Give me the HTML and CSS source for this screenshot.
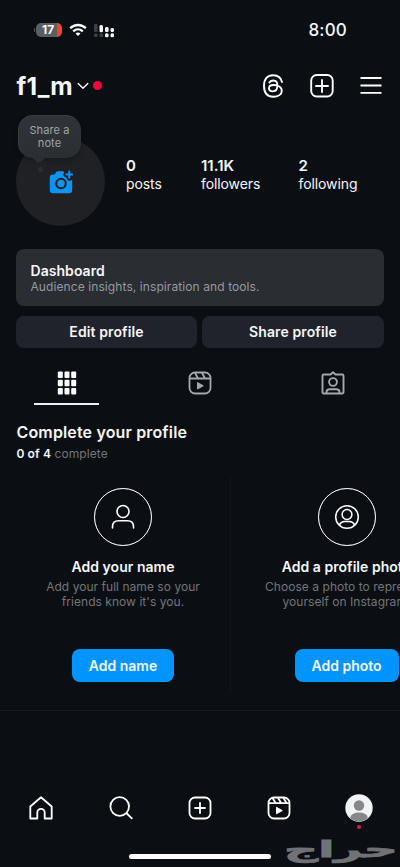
FILE: index.html
```html
<!DOCTYPE html>
<html lang="en">
<head>
<meta charset="utf-8">
<meta name="viewport" content="width=device-width, initial-scale=1">
<title>f1_m</title>
<link rel="stylesheet" href="styles.css">
</head>
<body>
<div class="screen">
  <div class="status">
    <div class="status-left">
      <div class="battery"><span>17</span></div>
      <svg class="wifi" width="18" height="14" viewBox="0 0 18 14" fill="none" stroke="#fff" stroke-width="2.3"><path d="M1.200 5.200C5.600.9 12.400.9 16.800 5.200M4.200 8.300C7 5.700 11 5.700 13.800 8.300"/><path d="M9 13 6.500 10.500C8 9.200 10 9.200 11.500 10.500Z" fill="#fff" stroke="none"/></svg>
      <svg class="signal" width="22" height="15" viewBox="0 0 22 15" fill="#fff"><g fill="#3c4045"><rect x="1" y="1" width="3.500" height="8" rx="1"/><rect x="1" y="10.500" width="3.500" height="3.500" rx="1"/><rect x="6.500" y="10.500" width="3.500" height="3.500" rx="1"/></g><rect x="6.500" y="2" width="3.500" height="7.200" rx="1.500"/><rect x="12" y="4" width="3.600" height="5" rx="1.500"/><rect x="17.500" y="5" width="3.500" height="4" rx="1.500"/><rect x="12" y="10.300" width="3.600" height="4" rx="1.500"/><rect x="17.500" y="10.300" width="3.500" height="4" rx="1.500"/></svg>
    </div>
    <div class="time">8:00</div>
  </div>

  <header class="topbar">
    <div class="account">
      <h1>f1_m</h1>
      <svg class="chevron" width="12" height="8" viewBox="0 0 12 8" fill="none" stroke="#fff" stroke-width="1.400" stroke-linecap="round" stroke-linejoin="round"><path d="M1.200 1.500 6 6.200 10.800 1.500"/></svg>
      <i class="dot"></i>
    </div>
    <div class="actions">
      <svg width="24" height="24" viewBox="0 0 24 24" fill="none" stroke="#fff" stroke-width="1.900" stroke-linecap="round"><path d="M21 8C20 3.500 17.200 1.200 12.300 1.200 6.300 1.200 3 5 3 12S6.300 22.800 12.300 22.800C17.300 22.800 20.800 20.300 20.800 16.700 20.800 13 17.200 11 12.500 11 9.700 11 8 12.300 8 14.300 8 16.200 9.700 17.400 11.800 17.400 14.900 17.400 16.400 15.400 16.400 11.600 16.400 8.200 15 6.500 12.300 6.500 10.400 6.500 9.200 7.200 8.400 8.500"/></svg>
      <svg width="24" height="24" viewBox="0 0 24 24" fill="none" stroke="#fff" stroke-width="1.900" stroke-linecap="round"><rect x="1.200" y="1" width="21.500" height="21.500" rx="5.500"/><path d="M12 6v12M6 12h12"/></svg>
      <svg width="24" height="24" viewBox="0 0 24 24" fill="none" stroke="#fff" stroke-width="1.800"><path d="M1.500 4h21M1.500 11.500h21M1.500 18.800h21"/></svg>
    </div>
  </header>

  <section class="profile">
    <div class="avatar">
      <svg width="24" height="24" viewBox="0 0 24 24"><path fill="#0b94fa" fill-rule="evenodd" d="M7 2.300 5.800 4.200Q5.500 4.600 4.700 4.600H4Q.8 4.600.8 7.800V20q0 3.200 3.200 3.200h16q3.200 0 3.200-3.200V9.700q-1.300 1-2.700 1-2 0-2.600-1.900-.3-1.300-1.700-1.700-1.900-.6-1.900-2.500 0-1.400 1.100-2.200l-.3-.5Q14.600 1.200 13.800 1.200H9Q7.700 1.200 7 2.300ZM12 7.700a5.800 5.800 0 1 0 0 11.600 5.800 5.800 0 0 0 0-11.600Zm0 2.100a3.700 3.700 0 1 1 0 7.400 3.700 3.700 0 0 1 0-7.400Z"/><path d="M20.300 1.500v6M17.300 4.500h6" stroke="#0b94fa" stroke-width="2" stroke-linecap="round"/></svg>
      <div class="note">Share a<br>note</div>
      <i class="note-tail"></i>
      <i class="note-bubble"></i>
    </div>
    <div class="stat s1"><b>0</b><span>posts</span></div>
    <div class="stat s2"><b>11.1K</b><span>followers</span></div>
    <div class="stat s3"><b>2</b><span>following</span></div>
  </section>

  <section class="dashboard"><b>Dashboard</b><span>Audience insights, inspiration and tools.</span></section>
  <div class="buttons"><button class="b1">Edit profile</button><button class="b2">Share profile</button></div>

  <nav class="tabs">
    <div class="tab active"><svg width="20" height="24" viewBox="0 0 20 24" fill="#fff"><rect x=".8" y=".5" width="5" height="6.500" rx="1"/><rect x="7.500" y=".5" width="5" height="6.500" rx="1"/><rect x="14.200" y=".5" width="5" height="6.500" rx="1"/><rect x=".8" y="8.700" width="5" height="6.500" rx="1"/><rect x="7.500" y="8.700" width="5" height="6.500" rx="1"/><rect x="14.200" y="8.700" width="5" height="6.500" rx="1"/><rect x=".8" y="16.900" width="5" height="6.500" rx="1"/><rect x="7.500" y="16.900" width="5" height="6.500" rx="1"/><rect x="14.200" y="16.900" width="5" height="6.500" rx="1"/></svg></div>
    <div class="tab"><svg width="24" height="24" viewBox="0 0 24 24" fill="none" stroke="#a4a8ad" stroke-width="1.800" stroke-linejoin="round"><rect x="1.500" y="1.500" width="21" height="21" rx="5.500"/><path d="M1.500 7.500h21M7 2l3.200 5.500M14 2l3.200 5.500"/><path d="M9.500 11.500v6.500l5.800-3.200Z" fill="#a4a8ad" stroke-width="1"/></svg></div>
    <div class="tab"><svg width="24" height="24" viewBox="0 0 24 24" fill="none" stroke="#a4a8ad" stroke-width="1.900" stroke-linejoin="round"><path d="M2.700 3.500h6.800L12 1.300l2.500 2.200h6.800q1.200 0 1.200 1.200v16.600q0 1.200-1.200 1.200H2.700Q1.500 22.500 1.500 21.300V4.700Q1.500 3.500 2.700 3.500Z"/><circle cx="12" cy="11" r="3.900"/><path d="M5.500 22v-1q0-2.800 3.300-2.800h6.400q3.300 0 3.300 2.800v1"/></svg></div>
  </nav>

  <section class="complete">
    <h2>Complete your profile</h2>
    <p class="progress"><b>0 of 4</b> complete</p>
    <div class="cards">
      <article class="card">
        <div class="ring"><svg width="26" height="26" viewBox="0 0 26 26" fill="none" stroke="#fff" stroke-width="1.600" stroke-linecap="round"><circle cx="13" cy="7.500" r="6"/><path d="M2.500 24v-1.200q0-6 6-6h9q6 0 6 6V24"/></svg></div>
        <h3>Add your name</h3>
        <p>Add your full name so your<br>friends know it's you.</p>
        <button class="blue">Add name</button>
      </article>
      <article class="card">
        <div class="ring"><svg width="26" height="26" viewBox="0 0 26 26" fill="none" stroke="#fff" stroke-width="1.500"><circle cx="13" cy="13" r="11.300"/><circle cx="13" cy="10.500" r="4.900"/><path d="M5.300 21q2-3.400 5-3.400h5.400q3 0 5 3.400"/></svg></div>
        <h3>Add a profile photo</h3>
        <p>Choose a photo to represent<br>yourself on Instagram.</p>
        <button class="blue photo">Add photo</button>
      </article>
    </div>
  </section>

  <nav class="bottom">
    <svg width="24" height="24" viewBox="0 0 24 24" fill="none" stroke="#fff" stroke-width="1.800" stroke-linejoin="round"><path d="M1.300 10.500 12 1.200l10.700 9.300v12H15.700V16.500a3.700 3.700 0 0 0-7.400 0v6H1.300Z"/></svg>
    <svg width="24" height="24" viewBox="0 0 24 24" fill="none" stroke="#fff" stroke-width="1.800"><circle cx="10.700" cy="10.500" r="9.300"/><path d="m17.300 17 6 5.800"/></svg>
    <svg width="24" height="24" viewBox="0 0 24 24" fill="none" stroke="#fff" stroke-width="1.800" stroke-linecap="round"><rect x="1.500" y="1.500" width="21" height="21" rx="5.500"/><path d="M12 7v10M7 12h10"/></svg>
    <svg width="24" height="24" viewBox="0 0 24 24" fill="none" stroke="#fff" stroke-width="1.800" stroke-linejoin="round"><rect x="1.500" y="1.500" width="21" height="21" rx="5.500"/><path d="M1.500 7.200h21M5.500 2l3.200 5M11 2l3.200 5M16.500 2l3 5"/><path d="M9.500 11.300v6.500l5.800-3.200Z" fill="#fff" stroke-width="1"/></svg>
    <div class="me"><svg width="28" height="28" viewBox="0 0 28 28"><defs><clipPath id="face"><circle cx="14" cy="14" r="13.500"/></clipPath></defs><circle cx="14" cy="14" r="13.700" fill="#f2f3f6"/><g fill="#858789" clip-path="url(#face)"><circle cx="14" cy="11.500" r="5.200"/><ellipse cx="14" cy="23.500" rx="8.700" ry="5"/></g></svg><i class="me-dot"></i></div>
  </nav>
  <footer class="foot"><div class="home-bar"></div><div class="watermark" lang="ar" dir="rtl"><span>حراج</span></div></footer>
</div>
</body>
</html>
```

FILE: styles.css
```css
* { box-sizing: border-box; }
html, body { margin: 0; background: #0b0f14; }
body { width: 400px; height: 867px; overflow: hidden; font-family: Inter, "Liberation Sans", sans-serif; color: #f5f7fa; }
h1, h2, h3, p { margin: 0; }
svg { display: block; flex: none; }
button { border: 0; padding: 0; font: 600 14px/18px Inter, sans-serif; letter-spacing: .12px; color: #f5f7fa; }
.screen { width: 400px; height: 867px; overflow: hidden; display: flex; flex-direction: column; }

.status { height: 60px; padding: 0 53px 0 36px; display: flex; align-items: center; justify-content: space-between; flex: none; }
.status-left { display: flex; align-items: center; }
.battery { width: 26px; height: 14px; border-radius: 5px; background: linear-gradient(90deg, #5c5e62 0 21px, #f04438 21px); font-size: 12px; line-height: 14px; font-weight: 700; padding-left: 6px; position: relative; }
.battery::before { content: ""; position: absolute; left: -2px; top: 5px; width: 1px; height: 4px; background: #55575a; }
.wifi { margin-left: 7px; }
.signal { margin-left: 6px; }
.time { font-size: 17px; font-weight: 500; letter-spacing: .2px; }

.topbar { height: 51px; padding: 0 17px 0 16.5px; display: flex; align-items: center; justify-content: space-between; flex: none; }
.account { display: flex; align-items: center; }
h1 { font-size: 24.5px; line-height: 30px; font-weight: 700; letter-spacing: .2px; }
.chevron { margin-left: 4.5px; }
.dot { width: 9px; height: 9px; border-radius: 50%; background: #f5073c; margin-left: 4px; }
.actions { display: flex; gap: 25px; }

.profile { height: 138px; padding: 26px 0 0 16px; display: flex; flex: none; }
.avatar { width: 89px; height: 89px; border-radius: 50%; background: #1f2124; display: flex; align-items: center; justify-content: center; position: relative; }
.avatar svg { margin-top: 1px; }
.note { position: absolute; left: 2px; top: -22px; width: 63px; height: 43px; border-radius: 15px; background: linear-gradient(#303339, #2b2e33); border: 1px solid #3a3d42; border-right-color: #2f3236; border-bottom-color: #2b2e32; box-shadow: 0 2px 5px #0a0d1155; color: #a1a4a8; font-size: 11px; line-height: 13.5px; letter-spacing: .1px; text-align: center; padding-top: 7.5px; }
.note-tail { position: absolute; left: 16px; top: 20px; width: 14px; height: 6px; clip-path: polygon(0 0, 100% 0, 65% 70%, 40% 100%); background: #2b2e33; }
.note-bubble { position: absolute; left: 22px; top: 30px; width: 5px; height: 5px; border-radius: 50%; background: #292c30; }
.stat { display: flex; flex-direction: column; font-size: 14px; line-height: 18px; padding-top: 20px; letter-spacing: -.1px; }
.stat b { font-size: 15px; font-weight: 600; letter-spacing: 0; }
.s1 { width: 75px; margin-left: 21px; }
.s2 { width: 97.5px; }

.dashboard { height: 57px; margin: 0 16px; background: #2a2d32; border-radius: 8px; padding: 13px 14.5px; display: flex; flex-direction: column; flex: none; }
.dashboard b { font-size: 14px; line-height: 17px; font-weight: 600; letter-spacing: .05px; }
.dashboard span { font-size: 12px; line-height: 15px; letter-spacing: .09px; color: #9699a0; }
.buttons { display: grid; grid-template-columns: 181px 182px; gap: 5px; margin: 10px 16px 0; height: 32px; flex: none; }
.buttons button { background: #20232b; border-radius: 8px; }

.tabs { height: 57px; display: grid; grid-template-columns: repeat(3, 133.33px); flex: none; }
.tab { display: flex; flex-direction: column; align-items: center; padding-top: 23px; }
.active::after { content: ""; width: 65px; height: 2px; background: #eceef6; margin-top: 8px; }

.complete { height: 306px; border-bottom: 1px solid #171b21; padding-top: 17px; flex: none; }
h2 { font-size: 16px; line-height: 20px; font-weight: 600; margin-left: 16.5px; letter-spacing: .15px; }
.progress { margin: 4px 0 0 16.5px; font-size: 12px; line-height: 16px; color: #71757b; letter-spacing: .09px; }
.progress b { color: #f5f7fa; font-weight: 600; }
.cards { display: flex; gap: 9.5px; margin: 15px 0 0 16.5px; }
.card { width: 214px; height: 216px; flex: none; display: flex; flex-direction: column; align-items: center; border-right: 1px solid #12161b; padding-top: 11px; }
.ring { width: 58px; height: 58px; border: 1.5px solid #f4f6f8; outline: .5px solid #f4f6f855; outline-offset: -1.5px; border-radius: 50%; display: flex; align-items: center; justify-content: center; }
h3 { font-size: 14px; line-height: 18px; font-weight: 600; margin-top: 12px; white-space: nowrap; letter-spacing: .03px; }
.card p { font-size: 12px; line-height: 14.5px; text-align: center; color: #71757b; margin-top: 4px; letter-spacing: .04px; white-space: nowrap; }
.blue { background: #0095fe; border-radius: 8px; width: 102px; height: 33px; margin-top: 40px; letter-spacing: 0; }
.photo { width: 104px; }

.bottom { height: 131px; padding: 83px 27px 0 29px; display: grid; grid-template-columns: 80px 79px 79px 78px 28px; flex: none; }
.bottom > svg { margin-top: 2px; }
.me { position: relative; width: 28px; height: 28px; }
.me-dot { position: absolute; left: 12px; top: 31px; width: 4px; height: 4px; border-radius: 50%; background: #e51247; }
.foot { height: 25px; padding-left: 129px; display: flex; }
.home-bar { width: 142px; height: 5px; margin-top: 12px; border-radius: 3px; background: #fff; }
.watermark { width: 112px; height: 25px; margin-left: 15px; color: #707276; font: 700 22px/25px "DejaVu Sans", sans-serif; -webkit-text-stroke: .8px #707276; }
.watermark span { display: block; width: max-content; transform: translateY(-5px) scaleX(2.15); transform-origin: right center; }
```
